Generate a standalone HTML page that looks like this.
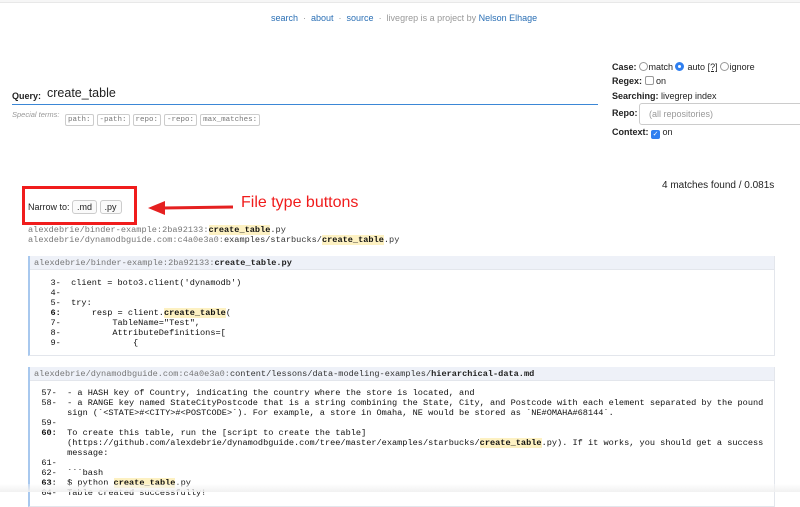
<!DOCTYPE html>
<html><head><meta charset="utf-8"><style>
*{margin:0;padding:0;box-sizing:border-box}
body{width:800px;height:492px;overflow:hidden;background:#fff;font-family:"Liberation Sans",sans-serif;color:#222;position:relative}
.a{position:absolute;white-space:pre}
a{color:#2a6fb5;text-decoration:none}
.m{font-family:"Liberation Mono",monospace;font-size:8.6px}
.g{color:#777}
.hl{background:#fdf1c2;font-weight:bold;color:#111}
.box{position:absolute;left:28px;width:747px;border-left:2px solid #a8c8ee;border-right:1px solid #e3e6ec;border-bottom:1px solid #e3e6ec}
.hd{background:#eef1f8;height:14px;line-height:14px;padding-left:4px;border-bottom:1px solid #e3e6ec;white-space:pre}
.code{line-height:10px;padding-top:8px;white-space:pre;color:#111}
.tk{display:inline-block;border:1px solid #ccc;border-radius:2px;font-family:"Liberation Mono",monospace;font-size:7.5px;color:#777;padding:0 2px;height:12px;line-height:11px;margin-right:3px}
.rb{display:inline-block;width:9px;height:9px;border:1px solid #999;border-radius:50%;vertical-align:-1px;margin:0 1px 0 2px}
.lb{font-weight:bold;font-size:9px}
</style></head><body>
<div style="position:absolute;left:0;top:0;width:800px;height:3px;border-bottom:1px solid #e8e8e8;background:#f6f6f6"></div>
<div class="a" style="left:271px;top:13px;font-size:9px;color:#999"><a>search</a>  ·  <a>about</a>  ·  <a>source</a>  ·  livegrep is a project by <a>Nelson Elhage</a></div>

<div class="a" style="left:12px;top:91px;font-size:9px;font-weight:bold">Query:</div>
<div class="a" style="left:47px;top:86px;font-size:12.5px">create_table</div>
<div style="position:absolute;left:12px;top:104px;width:586px;height:1px;background:#3b87d6"></div>
<div class="a" style="left:12px;top:110px;font-size:7.5px;color:#999;font-style:italic">Special terms:</div>
<div class="a" style="left:65px;top:108px"><span class="tk">path:</span><span class="tk">-path:</span><span class="tk">repo:</span><span class="tk">-repo:</span><span class="tk">max_matches:</span></div>

<div class="a" style="left:612px;top:62px;font-size:9px"><span class="lb">Case:</span><span class="rb"></span>match<span class="rb" style="border:3px solid #2f7ff0"></span> auto <u>[?]</u><span class="rb"></span>ignore</div>
<div class="a" style="left:612px;top:76px;font-size:9px"><span class="lb">Regex:</span> <span class="rb" style="border-radius:2px;margin:0"></span> on</div>
<div class="a" style="left:612px;top:91px;font-size:9px"><span class="lb">Searching:</span> livegrep index</div>
<div class="a" style="left:612px;top:108px;font-size:9px"><span class="lb">Repo:</span></div>
<div style="position:absolute;left:639px;top:103px;width:170px;height:22px;border:1px solid #ccc;border-radius:3px;font-size:9px;color:#999;padding:5px 0 0 9px">(all repositories)</div>
<div class="a" style="left:612px;top:127px;font-size:9px"><span class="lb">Context:</span> <span style="display:inline-block;width:9px;height:9px;background:#2f7ff0;border-radius:2px;color:#fff;font-size:7px;line-height:9px;text-align:center;vertical-align:-1px">✓</span> on</div>

<div class="a" style="left:662px;top:180px;font-size:10px">4 matches found / 0.081s</div>

<div style="position:absolute;left:22px;top:186px;width:115px;height:39px;border:3px solid #f01c1c"></div>
<div class="a" style="left:28px;top:200px;font-size:9px">Narrow to: <span style="display:inline-block;border:1px solid #ccc;border-radius:3px;padding:1px 4px;background:#fafafa">.md</span> <span style="display:inline-block;border:1px solid #ccc;border-radius:3px;padding:1px 4px;background:#fafafa">.py</span></div>
<svg style="position:absolute;left:147px;top:198px" width="88" height="20"><line x1="16" y1="10" x2="86" y2="9" stroke="#e52020" stroke-width="3"/><polygon points="1,10 18,3 18,17" fill="#e52020"/></svg>
<div class="a" style="left:241px;top:194px;font-size:16px;color:#f01c1c">File type buttons</div>

<div class="a m g" style="left:28px;top:225px;line-height:10px">alexdebrie/binder-example:2ba92133:<span class="hl">create_table</span><span style="color:#333">.py</span>
alexdebrie/dynamodbguide.com:c4a0e3a0:<span style="color:#333">examples/starbucks/</span><span class="hl">create_table</span><span style="color:#333">.py</span></div>

<div class="box m" style="top:256px;height:100px">
<div class="hd g">alexdebrie/binder-example:2ba92133:<b style="color:#222">create_table.py</b></div>
<div class="code" style="padding-left:5px">   3-  client = boto3.client('dynamodb')
   4-
   5-  try:
<b>   6:</b>      resp = client.<span class="hl">create_table</span>(
   7-          TableName="Test",
   8-          AttributeDefinitions=[
   9-              {</div>
</div>

<div class="box m" style="top:367px;height:140px">
<div class="hd g">alexdebrie/dynamodbguide.com:c4a0e3a0:<span style="color:#333">content/lessons/data-modeling-examples/</span><b style="color:#222">hierarchical-data.md</b></div>
<div class="code" style="padding-left:1px;padding-top:7px">  57-  - a HASH key of Country, indicating the country where the store is located, and
  58-  - a RANGE key named StateCityPostcode that is a string combining the State, City, and Postcode with each element separated by the pound
       sign (&#96;&lt;STATE&gt;#&lt;CITY&gt;#&lt;POSTCODE&gt;&#96;). For example, a store in Omaha, NE would be stored as &#96;NE#OMAHA#68144&#96;.
  59-
<b>  60:</b>  To create this table, run the [script to create the table]
       (https://github.com/alexdebrie/dynamodbguide.com/tree/master/examples/starbucks/<span class="hl">create_table</span>.py). If it works, you should get a success
       message:
  61-
  62-  &#96;&#96;&#96;bash
<b>  63:</b>  $ python <span class="hl">create_table</span>.py
  64-  Table created successfully!</div>
</div>
<div style="position:absolute;left:0;top:484px;width:800px;height:8px;background:linear-gradient(rgba(255,255,255,0.3),rgba(240,240,240,.95))"></div>
</body></html>
